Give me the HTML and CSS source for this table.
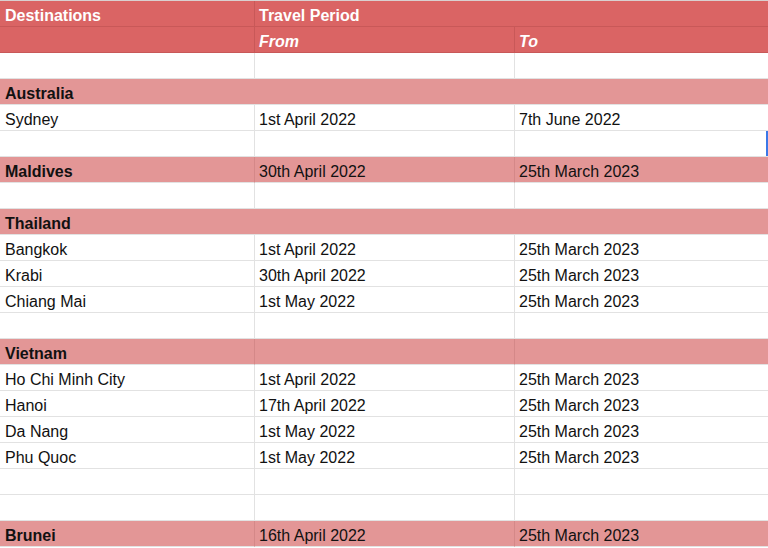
FILE: index.html
```html
<!DOCTYPE html>
<html>
<head>
<meta charset="utf-8">
<link rel="stylesheet" href="styles.css">
</head>
<body>
<div class="sheet">
  <div class="c a hd">Destinations</div>
  <div class="c b2 hd span2">Travel Period</div>

  <div class="c a hd"></div>
  <div class="c b2 hd it">From</div>
  <div class="c z hd it">To</div>

  <div class="c a"></div><div class="c b2"></div><div class="c z"></div>

  <div class="c a pk b span3">Australia</div>

  <div class="c a">Sydney</div><div class="c b2">1st April 2022</div><div class="c z">7th June 2022</div>

  <div class="c a"></div><div class="c b2"></div><div class="c z sel"></div>

  <div class="c a pk b">Maldives</div><div class="c b2 pk">30th April 2022</div><div class="c z pk">25th March 2023</div>

  <div class="c a"></div><div class="c b2"></div><div class="c z"></div>

  <div class="c a pk b span3">Thailand</div>

  <div class="c a">Bangkok</div><div class="c b2">1st April 2022</div><div class="c z">25th March 2023</div>
  <div class="c a">Krabi</div><div class="c b2">30th April 2022</div><div class="c z">25th March 2023</div>
  <div class="c a">Chiang Mai</div><div class="c b2">1st May 2022</div><div class="c z">25th March 2023</div>

  <div class="c a"></div><div class="c b2"></div><div class="c z"></div>

  <div class="c a pk b">Vietnam</div><div class="c b2 pk"></div><div class="c z pk"></div>

  <div class="c a">Ho Chi Minh City</div><div class="c b2">1st April 2022</div><div class="c z">25th March 2023</div>
  <div class="c a">Hanoi</div><div class="c b2">17th April 2022</div><div class="c z">25th March 2023</div>
  <div class="c a">Da Nang</div><div class="c b2">1st May 2022</div><div class="c z">25th March 2023</div>
  <div class="c a">Phu Quoc</div><div class="c b2">1st May 2022</div><div class="c z">25th March 2023</div>

  <div class="c a"></div><div class="c b2"></div><div class="c z"></div>
  <div class="c a"></div><div class="c b2"></div><div class="c z"></div>

  <div class="c a pk b">Brunei</div><div class="c b2 pk">16th April 2022</div><div class="c z pk">25th March 2023</div>
</div>
</body>
</html>
```

FILE: styles.css
```css
html, body {
  margin: 0;
  padding: 0;
  background: #ffffff;
}
body {
  width: 768px;
  height: 548px;
  overflow: hidden;
  font-family: "Liberation Sans", Arial, sans-serif;
  font-size: 16px;
  color: #111111;
}
.sheet {
  display: grid;
  grid-template-columns: 255px 260px 253px;
  grid-auto-rows: 26px;
  border-top: 1px solid #d9d0d0;
}
.c {
  box-sizing: border-box;
  border-right: 1px solid #e2e2e2;
  border-bottom: 1px solid #e2e2e2;
  padding: 0 4px 1px 4px;
  display: flex;
  align-items: flex-end;
  white-space: nowrap;
  line-height: 18px;
}
.a { padding-left: 5px; }
.b2 { padding-left: 4px; }
.z { padding-left: 4px; border-right: none; }
.span2 { grid-column: span 2; border-right: none; }
.span3 { grid-column: span 3; border-right: none; }
.hd {
  background: #da6464;
  color: #ffffff;
  font-weight: bold;
  border-right-color: #c85858;
  border-bottom-color: #c85858;
}
.it { font-style: italic; }
.pk {
  background: #e39696;
  border-right-color: #d48888;
}
.b { font-weight: bold; }
.sel {
  box-shadow: inset -2px 0 0 #3b78e7;
}
```
